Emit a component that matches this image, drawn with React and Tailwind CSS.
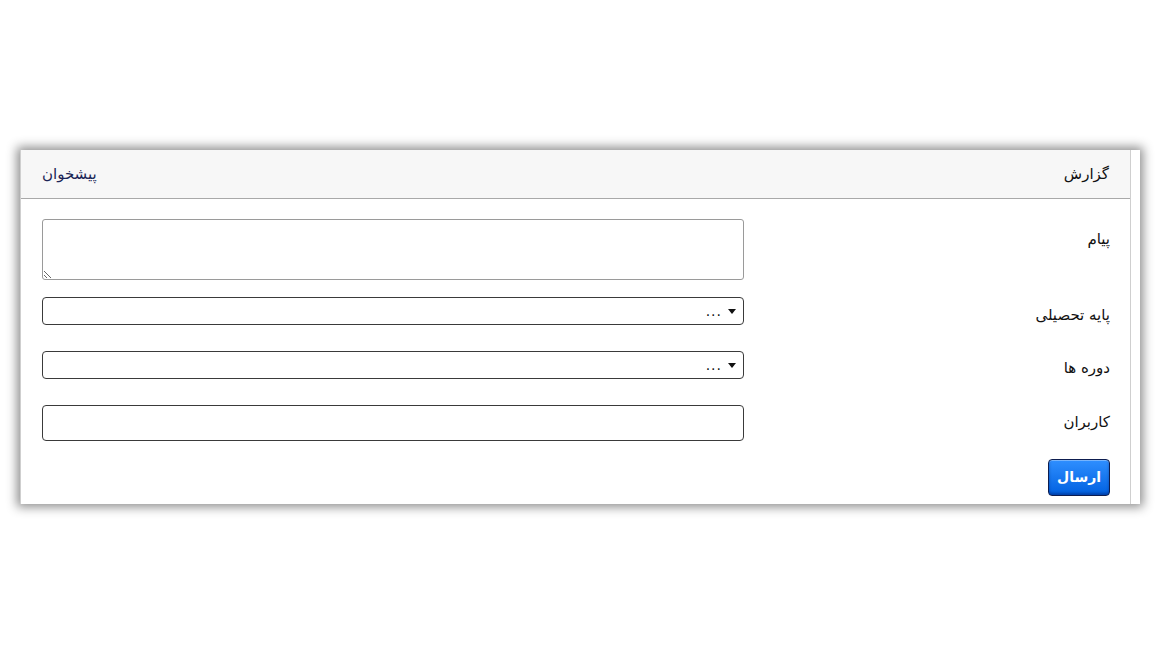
import React from 'react'

const FONT = "font-['DejaVu_Sans',Tahoma,sans-serif]"

function Caret() {
  return (
    <svg width="8" height="5" viewBox="0 0 8 5" className="shrink-0">
      <path d="M0 0h8L4 5z" fill="#111" />
    </svg>
  )
}

function FakeSelect() {
  return (
    <div className="flex h-[28px] w-full items-center gap-[6px] rounded-[4px] border border-[#3a3a3a] bg-white pr-[7px] text-[14px] text-[#111]">
      <Caret />
      <span className="leading-none tracking-[1px]">...</span>
    </div>
  )
}

function Row({ label, labelPad, h, mb, children }) {
  return (
    <div className={`flex items-start ${h} ${mb}`}>
      <div className={`w-[386px] shrink-0 pr-[20px] text-[15px] leading-[24px] text-[#111] ${labelPad}`}>{label}</div>
      <div className="flex-1 pl-[21px]">{children}</div>
    </div>
  )
}

export default function App() {
  return (
    <div className={`min-h-[654px] bg-white px-[20px] pt-[150px] ${FONT}`}>
      <div dir="rtl" className="h-[354px] w-[1120px] overflow-hidden bg-white shadow-[0_0_10px_3px_rgba(0,0,0,0.45)]">
        <div className="mr-[9px] h-full border-x border-[#cfcfcf]">
          <div className="flex h-[49px] items-center justify-between border-b border-[#a9a9a9] bg-[#f7f7f7] px-[21px] text-[15px]">
            <span className="text-[#111]">گزارش</span>
            <span className="text-[#1b2556]">پیشخوان</span>
          </div>

          <div className="pt-[20px]">
            <Row label="پیام" labelPad="pt-[8px]" h="h-[61px]" mb="mb-[17px]">
              <textarea
                dir="rtl"
                className="block h-[61px] w-full rounded-[3px] border border-[#9a9a9a] bg-white outline-none"
              />
            </Row>
            <Row label="پایه تحصیلی" labelPad="pt-[6px]" h="h-[28px]" mb="mb-[26px]">
              <FakeSelect />
            </Row>
            <Row label="دوره ها" labelPad="pt-[5px]" h="h-[28px]" mb="mb-[26px]">
              <FakeSelect />
            </Row>
            <Row label="کاربران" labelPad="pt-[5px]" h="h-[36px]" mb="mb-[18px]">
              <div className="h-[36px] w-full rounded-[4px] border border-[#3a3a3a] bg-white" />
            </Row>
            <div className="pr-[20px]">
              <button className="h-[37px] w-[62px] rounded-[4px] border border-[#0d1d4f] bg-[linear-gradient(#2f8fff,#0060e0)] text-[14px] font-bold text-white shadow-[inset_0_1px_0_rgba(255,255,255,0.35),inset_0_-2px_3px_rgba(0,0,60,0.35)]">
                ارسال
              </button>
            </div>
          </div>
        </div>
      </div>
    </div>
  )
}
